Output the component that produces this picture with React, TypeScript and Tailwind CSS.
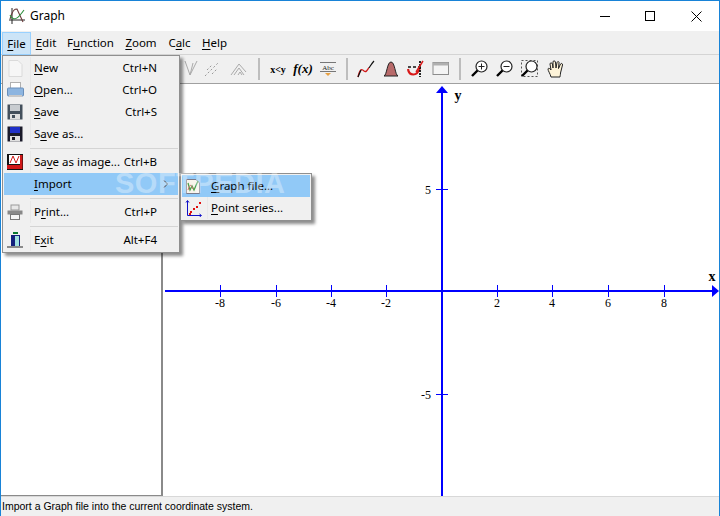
import React from "react";

function TB({ w = 25, children }: { w?: number; children: React.ReactNode }) {
  return <div style={{ width: w }} className="h-[24px] flex items-center justify-center shrink-0">{children}</div>;
}

const Zoom = ({ mark, box }: { mark?: "plus" | "minus"; box?: boolean }) => (
  <svg width="20" height="20" viewBox="0 0 20 20">
    {box && <rect x="1.5" y="1.5" width="16" height="16" fill="none" stroke="#555" strokeDasharray="2 2" />}
    <circle cx="11.5" cy="7.5" r="5.5" fill="#fff" stroke="#222" strokeWidth="1.2" />
    <path d="M7.5 11.5 L2 17" stroke="#000" strokeWidth="2.4" />
    {mark && <path d="M8.5 7.5 H14.5" stroke="#222" />}
    {mark === "plus" && <path d="M11.5 4.5 V10.5" stroke="#222" />}
  </svg>
);

function Toolbar() {
  return (
    <div className="h-[29px] bg-[#f0f0f0] flex items-center pl-[3px] border-b border-[#a0a0a0] shrink-0">
      <div className="w-[178px] shrink-0" />
      <TB w={17}>
        <svg width="14" height="18" viewBox="0 0 14 18" fill="none" stroke="#aaa"><path d="M1 1 L6 15 L13 1 M6 15 L9 3" /></svg>
      </TB>
      <TB w={26}>
        <svg width="16" height="16" viewBox="0 0 16 16" fill="none" stroke="#999" strokeDasharray="2 2"><path d="M1 15 L15 1 M3 9 L8 4 M8 13 L13 8" /></svg>
      </TB>
      <TB w={27}>
        <svg width="17" height="14" viewBox="0 0 17 14" fill="none" stroke="#aaa"><path d="M1 13 L9 2 L16 10 M4 13 L9 6 L14 13 M8 13 L10 10 L12 13" /></svg>
      </TB>
      <div className="w-[2px] h-[22px] bg-[#bdbdbd] ml-[6px] mr-[5px]" />
      <TB w={26}><span className="font-['Liberation_Serif',serif] font-bold text-[10px] text-black">x&lt;y</span></TB>
      <TB w={24}><span className="font-['Liberation_Serif',serif] italic font-bold text-[13px] text-black">f(x)</span></TB>
      <TB w={26}>
        <svg width="16" height="18" viewBox="0 0 16 18">
          <rect x="0" y="2" width="16" height="1" fill="#777" />
          <rect x="0" y="11" width="16" height="1" fill="#777" />
          <path d="M5 13 H11 L8 16 Z" fill="#e8a040" />
          <text x="8" y="10" textAnchor="middle" fontSize="7" fontFamily="Liberation Serif, serif" fill="#222">Abc</text>
        </svg>
      </TB>
      <div className="w-[2px] h-[22px] bg-[#bdbdbd] ml-[5px] mr-[5px]" />
      <TB w={25}>
        <svg width="18" height="18" viewBox="0 0 18 18" fill="none"><path d="M1 17 C3 8 5 9 7 11 C10 13 11 8 12 8" stroke="#d01818" strokeWidth="1.3" /><path d="M1 17 L4 10 M12 8 C14 5 15 3 17 1" stroke="#111" strokeWidth="1.2" /></svg>
      </TB>
      <TB w={25}>
        <svg width="16" height="16" viewBox="0 0 16 16"><path d="M1 15 C4 14 4 1 8 1 C12 1 12 14 15 15 Z" fill="#b86a6a" stroke="#222" /></svg>
      </TB>
      <TB w={25}>
        <svg width="18" height="18" viewBox="0 0 18 18" fill="none"><path d="M1 9 C2 16 10 17 13 8" stroke="#d81818" strokeWidth="2.2" /><path d="M1 7 H15" stroke="#111" strokeWidth="1.6" strokeDasharray="3 2" /><path d="M13 1 V17" stroke="#111" strokeWidth="1.8" strokeDasharray="2 1" /><path d="M9 12 L16 1" stroke="#d81818" strokeWidth="1.4" /></svg>
      </TB>
      <TB w={25}>
        <svg width="18" height="16" viewBox="0 0 18 16"><rect x="1" y="1.5" width="15.5" height="12" fill="#f4f4f4" stroke="#8c8c8c" /><rect x="1" y="1.5" width="15.5" height="3" fill="#b0b0b0" /></svg>
      </TB>
      <div className="w-[2px] h-[22px] bg-[#bdbdbd] ml-[6px] mr-[6px]" />
      <TB w={25}><Zoom mark="plus" /></TB>
      <TB w={25}><Zoom mark="minus" /></TB>
      <TB w={26}><Zoom box /></TB>
      <TB w={26}>
        <svg width="18" height="19" viewBox="0 0 18 19"><path d="M4 17 C3 13 1 11 1 9 C1 8 3 8 4 10 L3 4 C3 2.500 5 2.500 5.500 4 L6 8 L6 2 C6 .5 8 .5 8.500 2 L9 8 L10 2.500 C10.500 1 12.500 1.500 12 3 L11.500 8.500 L13.500 4 C14 3 16 3.500 15.500 5 L13.500 13 C13.500 15 13 16 13 17 Z" fill="#fdf3d8" stroke="#222" strokeWidth="1" /></svg>
      </TB>
    </div>
  );
}

function Label({ text, u }: { text: string; u: number }) {
  return (
    <span>
      {text.slice(0, u)}
      <span className="underline underline-offset-2">{text[u]}</span>
      {text.slice(u + 1)}
    </span>
  );
}

function Item({ text, u, sc, hi, icon, arrow, sub }: { text: string; u: number; sc?: string; hi?: boolean; icon?: React.ReactNode; arrow?: boolean; sub?: boolean }) {
  return (
    <div className={`relative h-[22px] flex items-center ${hi ? "bg-[#91c9f7]" : ""}`}>
      <div className="w-[22px] flex items-center justify-center shrink-0">{icon}</div>
      <div className={`${sub ? "w-[3px]" : "w-[4px]"} shrink-0`} />
      <div className={`w-px self-stretch shrink-0 ${hi ? "" : "bg-[#e8e8e8]"}`} />
      <div className="pl-[3px] flex-1"><Label text={text} u={u} /></div>
      {sc && <div className="absolute right-[21px]">{sc}</div>}
      {arrow && (
        <svg className="mr-[9px]" width="6" height="8" viewBox="0 0 6 8" fill="none" stroke="#444"><path d="M1 0.5 L4.500 4 L1 7.500" /></svg>
      )}
    </div>
  );
}

const MenuSep = () => (
  <div className="h-[6px] flex items-center pl-[26px]">
    <div className="h-px w-full bg-[#d4d4d4]" />
  </div>
);

const Floppy = ({ body = "#44505c", as }: { body?: string; as?: boolean }) => (
  <svg width="16" height="16" viewBox="0 0 16 16">
    <rect x="0.5" y="0.5" width="15" height="15" fill={body} />
    <rect x="3" y="1" width="10" height="6" fill={as ? "#2030c8" : "#c8ccd0"} />
    <rect x="3" y="10" width="10" height="5.500" fill="#e0e0e0" />
    <rect x="5" y="11" width="3" height="3" fill={body} />
  </svg>
);

function FileMenu() {
  return (
    <div className="absolute left-[1px] top-[54px] w-[178px] h-[198px] bg-[#f0f0f0] border border-[#8f8f8f] shadow-[3px_3px_3px_rgba(0,0,0,0.45)] p-[1px] text-[11.5px] text-black z-10">
      <Item text="New" u={0} sc="Ctrl+N" icon={
        <svg width="15" height="17" viewBox="0 0 15 17"><path d="M1 0.5 H10 L14 4.500 V16.500 H1 Z" fill="#f6f6f6" stroke="#dadada" /></svg>} />
      <Item text="Open..." u={0} sc="Ctrl+O" icon={
        <svg width="17" height="16" viewBox="0 0 17 16"><rect x="3.500" y="0.500" width="10" height="6" fill="#fff" stroke="#b0b0b0" /><rect x="0.500" y="6" width="16" height="8" rx="1" fill="#8db5e0" stroke="#6a8fba" /><rect x="2" y="13" width="13" height="2" fill="#c8c8c8" /></svg>} />
      <Item text="Save" u={0} sc="Ctrl+S" icon={<Floppy />} />
      <Item text="Save as..." u={1} icon={<Floppy body="#1a1a2a" as />} />
      <MenuSep />
      <Item text="Save as image..." u={2} sc="Ctrl+B" icon={
        <svg width="16" height="16" viewBox="0 0 16 16"><rect width="16" height="16" fill="#111" /><rect x="2" y="1" width="11" height="9" fill="#fff" /><path d="M3 9 L6 2 L9 9 L12 2" fill="none" stroke="#d01818" /><rect x="13" y="1" width="2.500" height="14" fill="#d01818" /><rect x="0" y="11" width="13" height="4" fill="#d01818" /></svg>} />
      <Item text="Import" u={0} hi arrow />
      <MenuSep />
      <Item text="Print..." u={1} sc="Ctrl+P" icon={
        <svg width="16" height="16" viewBox="0 0 16 16"><rect x="4" y="1" width="8" height="5" fill="#e8e8e8" stroke="#999" /><rect x="0.500" y="6.500" width="15" height="4" fill="#888" /><rect x="3.500" y="10.500" width="9" height="5" fill="#f4f4f4" stroke="#777" /></svg>} />
      <MenuSep />
      <Item text="Exit" u={1} sc="Alt+F4" icon={
        <svg width="16" height="17" viewBox="0 0 16 17"><rect x="6" y="0" width="5" height="2" fill="#087830" /><rect x="4" y="3" width="9" height="12" fill="#12207c" /><rect x="8" y="4" width="4" height="10" fill="#9fe0e0" /><rect x="0" y="14" width="16" height="2" fill="#8a8a8a" /></svg>} />
    </div>
  );
}

function SubMenu() {
  return (
    <div className="absolute left-[179px] top-[172px] w-[132px] h-[48px] bg-[#f0f0f0] border border-[#8f8f8f] shadow-[3px_3px_3px_rgba(0,0,0,0.45)] p-[1px] text-[11.5px] text-black z-20">
      <Item sub text="Graph file..." u={0} hi icon={
        <svg width="16" height="17" viewBox="0 0 16 17"><path d="M1.500 1.500 H11 L14.500 5 V15.500 H1.500 Z" fill="#f8f4ec" stroke="#7a7a8a" /><path d="M3 5 L5 12 L7 8 L9 12 L13 3" fill="none" stroke="#4aa04a" strokeWidth="1.300" /><path d="M3 12 C5 6 6 6 8 11" fill="none" stroke="#d07070" /></svg>} />
      <Item sub text="Point series..." u={0} icon={
        <svg width="17" height="17" viewBox="0 0 17 17"><path d="M2.500 1 V15.500 H16" fill="none" stroke="#1010c8" /><path d="M1 2.500 L2.500 0.500 L4 2.500 M14.500 14 L16.500 15.500 L14.500 17" fill="none" stroke="#1010c8" /><g fill="#e01010"><rect x="5" y="11" width="2" height="2" /><rect x="8" y="8" width="2" height="2" /><rect x="11" y="6" width="2" height="2" /><rect x="14" y="2" width="2" height="2" /><rect x="4" y="13" width="2" height="2" /></g></svg>} />
    </div>
  );
}

function Chart() {
  const xs: [number, string][] = [[220, "-8"], [276, "-6"], [331, "-4"], [386, "-2"], [497, "2"], [552, "4"], [608, "6"], [664, "8"]];
  return (
    <svg className="flex-1 h-full bg-white" viewBox="163 84 556 412">
      <rect x="165" y="290" width="548" height="2" fill="#0000ff" />
      <path d="M712 285 L719 291 L712 297 Z" fill="#0000ff" />
      <rect x="441" y="92" width="2" height="404" fill="#0000ff" />
      <path d="M436 93 L442 86 L448 93 Z" fill="#0000ff" />
      {xs.map(([x, l]) => (
        <g key={l}>
          <rect x={x} y="285" width="1" height="12" fill="#0000ff" />
          <text x={x} y="307" textAnchor="middle" fontSize="12" fontFamily="Liberation Serif, serif" fill="#000">{l}</text>
        </g>
      ))}
      <rect x="436" y="189" width="12" height="1" fill="#0000ff" />
      <rect x="436" y="394" width="12" height="1" fill="#0000ff" />
      <text x="431" y="194" textAnchor="end" fontSize="12" fontFamily="Liberation Serif, serif" fill="#000">5</text>
      <text x="431" y="399" textAnchor="end" fontSize="12" fontFamily="Liberation Serif, serif" fill="#000">-5</text>
      <text x="458" y="100" textAnchor="middle" fontSize="14" fontWeight="bold" fontFamily="Liberation Serif, serif" fill="#000">y</text>
      <text x="712" y="281" textAnchor="middle" fontSize="14" fontWeight="bold" fontFamily="Liberation Serif, serif" fill="#000">x</text>
    </svg>
  );
}

export default function App() {
  const menus: [string, number, string][] = [["Edit", 0, "w-[30px]"], ["Function", 1, "w-[59px]"], ["Zoom", 0, "w-[42px]"], ["Calc", 1, "w-[35px]"], ["Help", 0, "w-[35px]"]];
  return (
    <div className="relative w-[720px] h-[516px] overflow-hidden border-x border-t border-[#1883d7] flex flex-col bg-white font-['Noto_Sans',sans-serif] text-[11.5px] text-black">
      <div className="h-[30px] flex items-center bg-white shrink-0">
        <svg className="ml-[8px]" width="17" height="18" viewBox="0 0 17 18" fill="none">
          <path d="M3 1 V17 M0 13 H16" stroke="#222" />
          <path d="M1 12 C4 2 6 2 8 2 L14 15" stroke="#6a3a3a" strokeWidth="1.100" />
          <path d="M1 8 C5 16 10 10 15 3" stroke="#2f8f3f" strokeWidth="1.100" />
        </svg>
        <span className="ml-[4px] text-[12px]">Graph</span>
        <div className="ml-auto flex items-center h-full">
          <div className="w-[45px] flex justify-center"><div className="w-[10px] h-px bg-black" /></div>
          <div className="w-[46px] flex justify-center"><div className="w-[10px] h-[10px] border border-black" /></div>
          <div className="w-[46px] flex justify-center">
            <svg width="11" height="11" viewBox="0 0 11 11" stroke="#000"><path d="M0.500 0.500 L10.500 10.500 M10.500 0.500 L0.500 10.500" /></svg>
          </div>
        </div>
      </div>
      <div className="h-[24px] bg-[#f0f0f0] flex items-stretch pl-[1px] shrink-0 border-b border-[#d4d4d4]">
        <div className="w-[29px] h-[23px] flex items-center justify-center bg-[#cce4f7] border border-[#99d1ff] mt-px"><Label text="File" u={0} /></div>
        {menus.map(([t, u, w]) => (
          <div key={t} className={`${w} flex items-center justify-center`}><Label text={t} u={u} /></div>
        ))}
      </div>
      <Toolbar />
      <div className="flex-1 flex min-h-0">
        <div className="w-[162px] h-full bg-white border-r-2 border-b border-[#8a8a8a] shrink-0" />
        <Chart />
      </div>
      <div className="h-[20px] bg-[#f0f0f0] border-t border-[#d8d8d8] flex items-center pl-[1px] font-['Liberation_Sans',sans-serif] text-[10.5px] shrink-0">
        Import a Graph file into the current coordinate system.
      </div>
      <FileMenu />
      <SubMenu />
      <div className="absolute left-[114px] top-[164px] z-30 font-['Liberation_Sans',sans-serif] font-bold text-[29px] leading-[36px] text-white/35 pointer-events-none tracking-[0.5px]">SOFTPEDIA</div>
    </div>
  );
}
